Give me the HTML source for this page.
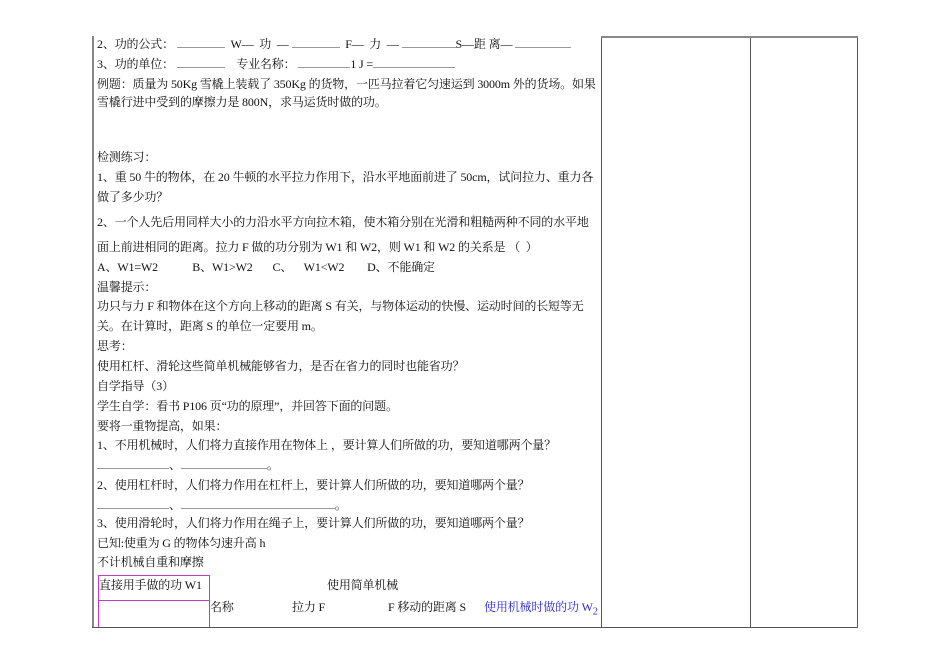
<!DOCTYPE html>
<html><head><meta charset="utf-8"><style>
body{margin:0;width:950px;height:672px;background:#fff;position:relative;overflow:hidden;font-family:"Liberation Serif","Noto Serif CJK SC",serif;font-size:12px;color:#111}
.l{position:absolute;left:97px;line-height:16px;white-space:pre;letter-spacing:-0.15px}
.v{position:absolute;background:#555;width:1px}
.u{display:inline-block;border-bottom:1px solid #999;height:11px;vertical-align:baseline}
.m{position:absolute;background:#c03cc8}
</style></head><body>
<div class="v" style="left:92px;top:36px;height:592px;width:2px;background:#888"></div>
<div class="v" style="left:601px;top:36px;height:592px"></div>
<div class="v" style="left:750px;top:36px;height:592px"></div>
<div class="v" style="left:857px;top:36px;height:592px"></div>
<div class="v" style="left:601px;top:36px;width:257px;height:2px;background:#888"></div>
<div class="v" style="left:92px;top:627px;width:766px;height:1px"></div>

<div class="m" style="left:98px;top:575px;width:111px;height:1px"></div>
<div class="m" style="left:98px;top:600px;width:111px;height:1px"></div>
<div class="m" style="left:98px;top:575px;width:1px;height:52px"></div>
<div class="m" style="left:209px;top:575px;width:1px;height:52px"></div>

<div class="l" style="top:36px">2、功的公式： <span class="u" style="width:48px"></span>  W—  功  — <span class="u" style="width:48px"></span>  F—  力  — <span class="u" style="width:54px"></span>S—距 离— <span class="u" style="width:56px"></span></div>
<div class="l" style="top:56px">3、功的单位： <span class="u" style="width:48px"></span>    专业名称： <span class="u" style="width:52px"></span>1 J =<span class="u" style="width:82px"></span></div>
<div class="l" style="top:76px">例题：质量为 50Kg 雪橇上装载了 350Kg 的货物，一匹马拉着它匀速运到 3000m 外的货场。如果</div>
<div class="l" style="top:94px">雪橇行进中受到的摩擦力是 800N，求马运货时做的功。</div>
<div class="l" style="top:149px">检测练习：</div>
<div class="l" style="top:169px">1、重 50 牛的物体，在 20 牛顿的水平拉力作用下，沿水平地面前进了 50cm，试问拉力、重力各</div>
<div class="l" style="top:189px">做了多少功？</div>
<div class="l" style="top:214px">2、一个人先后用同样大小的力沿水平方向拉木箱，使木箱分别在光滑和粗糙两种不同的水平地</div>
<div class="l" style="top:239px">面上前进相同的距离。拉力 F 做的功分别为 W1 和 W2，则 W1 和 W2 的关系是 （  ）</div>
<div class="l" style="top:259px">A、W1=W2            B、W1&gt;W2       C、    W1&lt;W2        D、不能确定</div>
<div class="l" style="top:279px">温馨提示：</div>
<div class="l" style="top:298px">功只与力 F 和物体在这个方向上移动的距离 S 有关，与物体运动的快慢、运动时间的长短等无</div>
<div class="l" style="top:318px">关。在计算时，距离 S 的单位一定要用 m。</div>
<div class="l" style="top:338px">思考：</div>
<div class="l" style="top:358px">使用杠杆、滑轮这些简单机械能够省力，是否在省力的同时也能省功？</div>
<div class="l" style="top:378px">自学指导（3）</div>
<div class="l" style="top:398px">学生自学：看书 P106 页“功的原理”，并回答下面的问题。</div>
<div class="l" style="top:418px">要将一重物提高，如果：</div>
<div class="l" style="top:437px">1、不用机械时，人们将力直接作用在物体上 ，要计算人们所做的功，要知道哪两个量？</div>
<div class="l" style="top:457px"><span class="u" style="width:72px"></span>、<span class="u" style="width:86px"></span>。</div>
<div class="l" style="top:477px">2、使用杠杆时，人们将力作用在杠杆上，要计算人们所做的功，要知道哪两个量？</div>
<div class="l" style="top:497px"><span class="u" style="width:72px"></span>、<span class="u" style="width:154px"></span>。</div>
<div class="l" style="top:515px">3、使用滑轮时，人们将力作用在绳子上，要计算人们所做的功，要知道哪两个量？</div>
<div class="l" style="top:535px">已知:使重为 G 的物体匀速升高 h</div>
<div class="l" style="top:554px">不计机械自重和摩擦</div>
<div class="l" style="top:577px;left:99px">直接用手做的功 W1</div>
<div class="l" style="top:577px;left:327px">使用简单机械</div>
<div class="l" style="top:599px;left:210px">名称</div>
<div class="l" style="top:599px;left:292px">拉力 F</div>
<div class="l" style="top:599px;left:388px">F 移动的距离 S</div>
<div class="l" style="top:599px;left:484px;color:#2a2ad0">使用机械时做的功 W<sub style="font-size:10px">2</sub></div>
</body></html>
